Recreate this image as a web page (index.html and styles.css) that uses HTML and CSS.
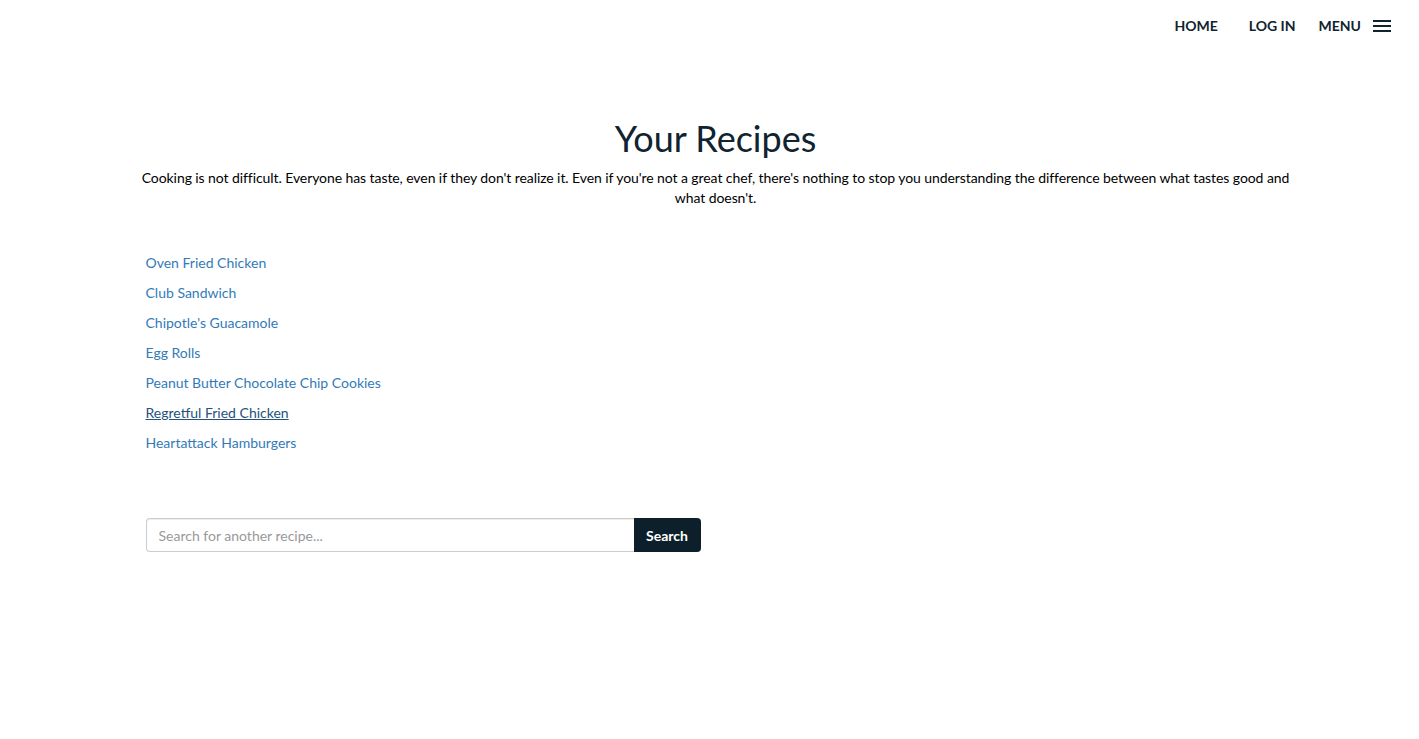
FILE: index.html
```html
<!DOCTYPE html>
<html>
<head>
<meta charset="utf-8">
<link rel="stylesheet" href="styles.css">
</head>
<body>
<header class="topbar">
  <nav class="nav">
    <a class="nav-link home" href="#">HOME</a>
    <a class="nav-link" href="#">LOG IN</a>
    <a class="nav-link menu" href="#">MENU
      <svg class="burger" width="18" height="14" viewBox="0 0 18 14"><rect x="0" y="1" width="18" height="2"/><rect x="0" y="6" width="18" height="2"/><rect x="0" y="11" width="18" height="2"/></svg>
    </a>
  </nav>
</header>
<main class="container">
  <h1 class="title">Your Recipes</h1>
  <p class="lead">Cooking is not difficult. Everyone has taste, even if they don't realize it. Even if you're not a great chef, there's nothing to stop you understanding the difference between what tastes good and what doesn't.</p>
  <ul class="recipes">
    <li><a href="#">Oven Fried Chicken</a></li>
    <li><a href="#">Club Sandwich</a></li>
    <li><a href="#">Chipotle's Guacamole</a></li>
    <li><a href="#">Egg Rolls</a></li>
    <li><a href="#">Peanut Butter Chocolate Chip Cookies</a></li>
    <li><a class="active" href="#">Regretful Fried Chicken</a></li>
    <li><a href="#">Heartattack Hamburgers</a></li>
  </ul>
  <form class="search">
    <input class="search-input" type="text" placeholder="Search for another recipe...">
    <button class="search-btn" type="button">Search</button>
  </form>
</main>
</body>
</html>
```
FILE: styles.css
```css
* { box-sizing: border-box; }
html, body { margin: 0; padding: 0; background: #fff; }
body {
  font-family: Lato, "Open Sans", sans-serif;
  font-size: 14px;
  line-height: 20px;
  color: #000;
}
.topbar {
  display: flex;
  justify-content: flex-end;
  height: 52px;
  padding-right: 28px;
}
.nav {
  display: flex;
  align-items: center;
}
.nav-link {
  font-weight: 700;
  font-size: 14px;
  color: #10232f;
  text-decoration: none;
  padding: 0 15px;
  display: flex;
  align-items: center;
}
.nav-link.home { padding-right: 16px; }
.nav-link.menu { padding-right: 0; padding-left: 8px; }
.burger { margin-left: 12px; fill: #10232f; }
.container {
  width: 1140px;
  margin-left: calc(50% - 564px);
}
.title {
  font-size: 36px;
  font-weight: 400;
  line-height: 40px;
  color: #10232f;
  text-align: center;
  margin: 66px 0 0;
}
.lead {
  text-align: center;
  margin: 10px -11px 0;
  letter-spacing: -0.08px;
}
.recipes {
  list-style: none;
  margin: 45px 0 0;
  padding: 0;
  display: flex;
  flex-direction: column;
  gap: 10px;
}
.recipes a {
  color: #337ab7;
  text-decoration: none;
}
.recipes a.active {
  color: #23527c;
  text-decoration: underline;
}
.search {
  display: flex;
  margin-top: 65px;
  width: 555px;
}
.search-input {
  flex: 1;
  height: 34px;
  border: 1px solid #ccc;
  border-right: none;
  border-radius: 4px 0 0 4px;
  padding: 6px 12px;
  font-family: Lato, sans-serif;
  font-size: 14px;
  color: #555;
  box-shadow: inset 0 1px 1px rgba(0,0,0,.075);
}
.search-input::placeholder { color: #999; }
.search-btn {
  width: 67px;
  height: 34px;
  border: none;
  border-radius: 0 4px 4px 0;
  background: #0d1f2b;
  color: #fff;
  font-family: Lato, sans-serif;
  font-weight: 700;
  font-size: 14px;
  padding: 0;
}
```
